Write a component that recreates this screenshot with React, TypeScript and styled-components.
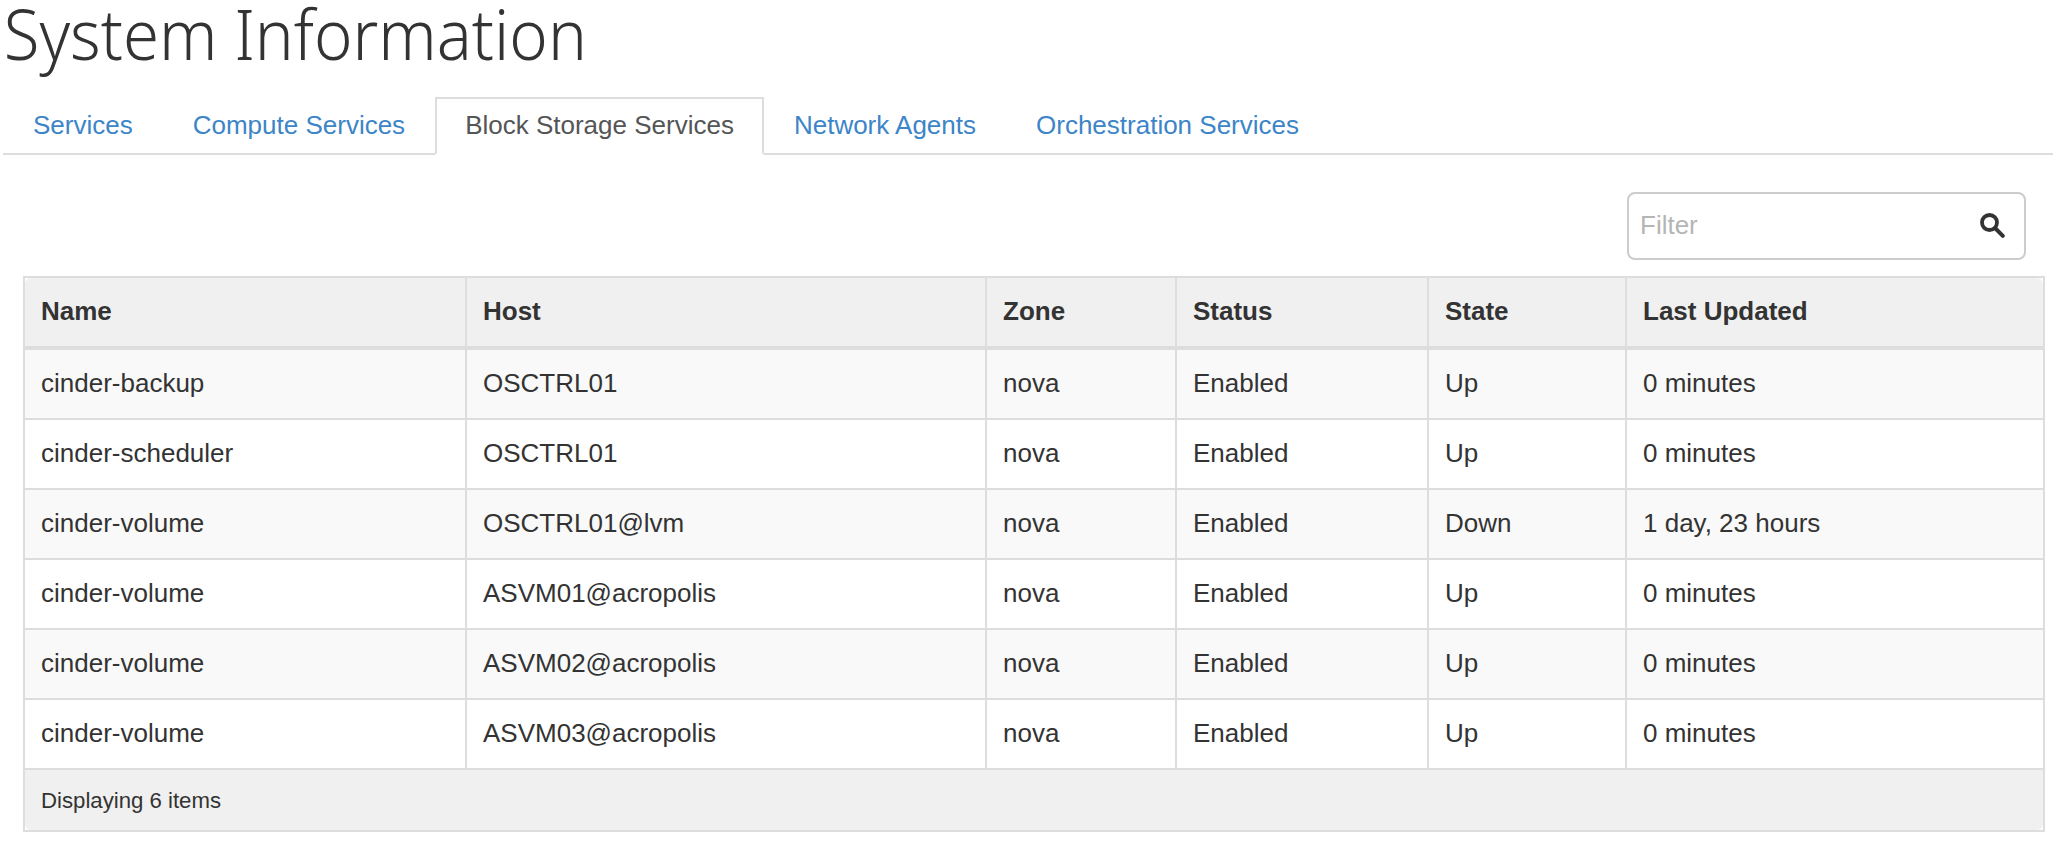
import styled, { createGlobalStyle } from "styled-components";

const GlobalStyle = createGlobalStyle`
  html, body {
    margin: 0;
    background: #fff;
    color: #333;
    font-family: "Liberation Sans", Arial, sans-serif;
    font-size: 26px;
    overflow: hidden;
  }
  * { box-sizing: border-box; }
`;

const Title = styled.h1`
  margin: 0;
  height: 97px;
  padding-left: 4px;
  font-family: "Noto Sans", sans-serif;
  font-weight: 350;
  font-size: 70px;
  line-height: 66px;
  color: #333;
  white-space: nowrap;
  transform: scaleX(0.934);
  transform-origin: left center;
`;

const Tabs = styled.ul`
  display: flex;
  margin: 0 0 0 3px;
  padding: 0;
  list-style: none;
  border-bottom: 2px solid #ddd;
`;

const TabItem = styled.li<{ $active?: boolean }>`
  height: 58px;
  margin-bottom: -2px;
  padding: 11px 28px 0;
  line-height: 30px;
  border: 2px solid ${(p) => (p.$active ? "#ddd" : "transparent")};
  border-bottom-color: ${(p) => (p.$active ? "#fff" : "transparent")};
  background: ${(p) => (p.$active ? "#fff" : "transparent")};
  color: ${(p) => (p.$active ? "#555" : "#3c85c8")};
`;

const Toolbar = styled.div`
  display: flex;
  justify-content: flex-end;
  padding: 37px 27px 16px 0;
`;

const FilterBox = styled.div`
  display: flex;
  align-items: center;
  justify-content: space-between;
  width: 399px;
  height: 68px;
  padding: 0 19px 2px 11px;
  border: 2px solid #ccc;
  border-radius: 8px;
  color: #b5b5b5;
`;

const TableWrap = styled.div`
  margin: 0 8px 0 23px;
`;

const Table = styled.table`
  width: 100%;
  table-layout: fixed;
  border-collapse: separate;
  border-spacing: 0;
  border: 2px solid #ddd;
`;

const HeadCell = styled.th`
  height: 72px;
  padding: 0 16px 2px;
  text-align: left;
  font-weight: 700;
  background: #f0f0f0;
  border-right: 2px solid #ddd;
  border-bottom: 4px solid #ddd;

  &:first-child {
    border-top-left-radius: 6px;
  }
  &:last-child {
    border-right: none;
    border-top-right-radius: 6px;
  }
`;

const Row = styled.tr<{ $odd: boolean }>`
  background: ${(p) => (p.$odd ? "#f9f9f9" : "#fff")};
`;

const Cell = styled.td`
  height: 70px;
  padding: 0 16px 2px;
  border-right: 2px solid #ddd;
  border-bottom: 2px solid #ddd;
  white-space: nowrap;

  &:last-child {
    border-right: none;
  }
`;

const FootCell = styled.td`
  height: 60px;
  padding: 2px 16px 0;
  background: #f0f0f0;
  font-size: 22.2px;
  border-bottom-left-radius: 6px;
  border-bottom-right-radius: 6px;
`;

const columns = [
  { label: "Name", width: 442 },
  { label: "Host", width: 520 },
  { label: "Zone", width: 190 },
  { label: "Status", width: 252 },
  { label: "State", width: 198 },
  { label: "Last Updated", width: 416 },
];

const rows = [
  ["cinder-backup", "OSCTRL01", "nova", "Enabled", "Up", "0 minutes"],
  ["cinder-scheduler", "OSCTRL01", "nova", "Enabled", "Up", "0 minutes"],
  ["cinder-volume", "OSCTRL01@lvm", "nova", "Enabled", "Down", "1 day, 23 hours"],
  ["cinder-volume", "ASVM01@acropolis", "nova", "Enabled", "Up", "0 minutes"],
  ["cinder-volume", "ASVM02@acropolis", "nova", "Enabled", "Up", "0 minutes"],
  ["cinder-volume", "ASVM03@acropolis", "nova", "Enabled", "Up", "0 minutes"],
];

const tabs = ["Services", "Compute Services", "Block Storage Services", "Network Agents", "Orchestration Services"];

function SearchIcon() {
  return (
    <svg width="25" height="25" viewBox="0 0 25 25" fill="none" stroke="#333">
      <circle cx="9.5" cy="9.5" r="7.5" strokeWidth="3.8" />
      <path d="M15.5 15.5L22.8 22.8" strokeWidth="4" strokeLinecap="round" />
    </svg>
  );
}

export default function App() {
  return (
    <>
      <GlobalStyle />
      <Title>System Information</Title>
      <Tabs>
        {tabs.map((tab, i) => (
          <TabItem key={tab} $active={i === 2}>
            {tab}
          </TabItem>
        ))}
      </Tabs>
      <Toolbar>
        <FilterBox>
          Filter
          <SearchIcon />
        </FilterBox>
      </Toolbar>
      <TableWrap>
        <Table>
          <colgroup>
            {columns.map((c) => (
              <col key={c.label} style={{ width: c.width }} />
            ))}
          </colgroup>
          <thead>
            <tr>
              {columns.map((c) => (
                <HeadCell key={c.label}>{c.label}</HeadCell>
              ))}
            </tr>
          </thead>
          <tbody>
            {rows.map((row, i) => (
              <Row key={i} $odd={i % 2 === 0}>
                {row.map((value, j) => (
                  <Cell key={j}>{value}</Cell>
                ))}
              </Row>
            ))}
          </tbody>
          <tfoot>
            <tr>
              <FootCell colSpan={6}>Displaying 6 items</FootCell>
            </tr>
          </tfoot>
        </Table>
      </TableWrap>
    </>
  );
}
